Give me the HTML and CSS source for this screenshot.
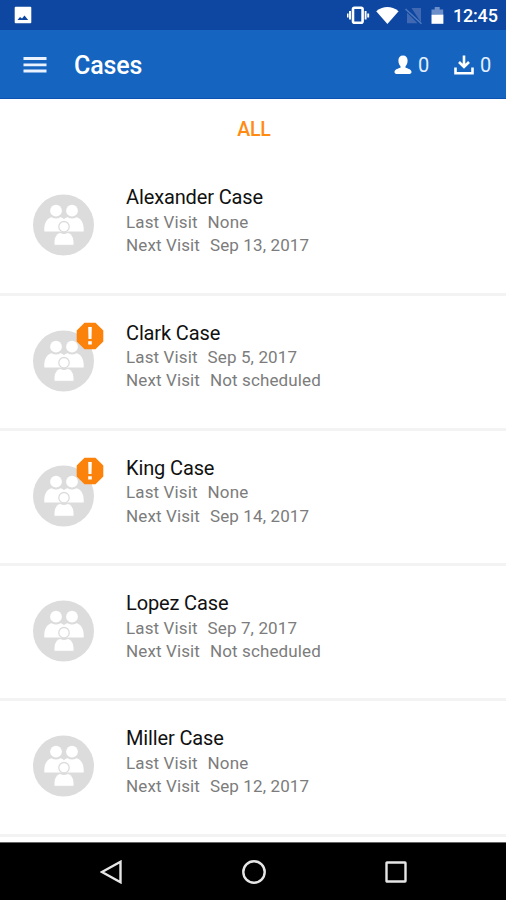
FILE: index.html
```html
<!DOCTYPE html>
<html lang="en">
<head>
<meta charset="utf-8">
<title>Cases</title>
<link rel="stylesheet" href="styles.css">
</head>
<body>
<svg class="defs" width="0" height="0" aria-hidden="true">
  <symbol id="family" viewBox="0 0 62 62">
    <circle cx="31.500" cy="31" r="30.500" fill="#dcdcdc"/>
    <g fill="#fff">
      <circle cx="24" cy="16.700" r="5.900"/><circle cx="40" cy="16.700" r="5.900"/>
      <path d="M12.300 37.500v-2.500c0-6 2.700-10.700 7.200-11.700q4.500 2.500 9 0c1.500.3 2.500 1 3.500 2 1-1 2-1.700 3.500-2q4.500 2.500 9 0c4.500 1 7.200 5.700 7.200 11.700v2.500z"/>
    </g>
    <path d="M22 51.300v-3c0-5 2.300-8.800 6-9.800q4 2 8 0c3.700 1 6 4.800 6 9.800v3z" fill="#fff" stroke="#dcdcdc" stroke-width="1"/>
    <circle cx="32" cy="32.700" r="5.200" fill="#fff" stroke="#dcdcdc" stroke-width="1.300"/>
  </symbol>
  <symbol id="alert" viewBox="0 0 28 28">
    <path d="M8.500.7h11l7.800 7.800v11l-7.800 7.800h-11L.7 19.500v-11z" fill="#fb830b"/>
    <path d="M12.200 5h3.600l-.3 12h-3zM12.200 19.200h3.600v3.400h-3.600z" fill="#fff"/>
  </symbol>
</svg>
<div class="screen">
  <div class="status">
    <svg class="photo" width="18" height="18" viewBox="0 0 18 18"><rect x=".7" y=".7" width="16.600" height="16.600" rx="1" fill="#fff"/><path d="M3.500 14l2.500-3 2 1.500 2.500-3 3.700 4.500z" fill="#0d47a1"/></svg>
    <svg class="sys" width="106" height="20" viewBox="0 0 106 20">
      <rect x="6" y="2.700" width="9.600" height="15" rx="1.500" fill="none" stroke="#fff" stroke-width="2.600"/>
      <path d="M3 6v8.500M18.600 6v8.500M.6 8.500v4M21.200 8.500v4" stroke="#fff" stroke-width="1.900"/>
      <path d="M29.200 6.200q11.200-8.200 22.400 0L40.400 18.900z" fill="#fff"/>
      <path d="M64.500 3H74v14.500zM60 7.500l10.500 10.800H60z" fill="#4169b3"/>
      <path d="M58.500 4L74.500 18.800" stroke="#4f79bd" stroke-width="1.500"/>
      <path d="M84.500 9V4.500h3.200V2h5v2.500h3.500v5z" fill="#6c8fc9"/><path d="M84.500 9.500h11.900v9.300H84.500z" fill="#fff"/>
    </svg>
    <span class="clock">12:45</span>
  </div>
  <header class="bar">
    <svg class="menu" width="24" height="18" viewBox="0 0 24 18"><path d="M.5 2.500h23M.5 8.800h23M.5 15h23" stroke="#eaf2ff" stroke-width="2.800"/></svg>
    <h1>Cases</h1>
    <svg class="person" width="18" height="20" viewBox="0 0 18 20"><path d="M9 .5c3 0 4.600 2 4.600 5 0 2.800-1 4.500-2.100 5.700v1.600c3.300.9 6 2 6 4.200 0 1.500-1.200 2-3 2H3.500c-1.800 0-3-.5-3-2 0-2.200 2.700-3.300 6-4.200v-1.600C5.400 10 4.400 8.300 4.400 5.500c0-3 1.600-5 4.600-5z" fill="#fff"/></svg>
    <span class="count">0</span>
    <svg class="download" width="20" height="20" viewBox="0 0 20 20"><path d="M10 .5v11M5 7l5 5 5-5M1.500 12.500v5.700h17v-5.700" fill="none" stroke="#fff" stroke-width="2.600"/></svg>
    <span class="count">0</span>
  </header>
  <main>
    <div class="filter">ALL</div>
    <ul class="cases">
      <li><div class="avatar"><svg class="face"><use href="#family"/></svg></div><div class="info"><h2>Alexander Case</h2><p><span>Last Visit</span><span>None</span></p><p><span>Next Visit</span><span>Sep 13, 2017</span></p></div></li>
      <li><div class="avatar"><svg class="face"><use href="#family"/></svg><svg class="badge"><use href="#alert"/></svg></div><div class="info"><h2>Clark Case</h2><p><span>Last Visit</span><span>Sep 5, 2017</span></p><p><span>Next Visit</span><span>Not scheduled</span></p></div></li>
      <li><div class="avatar"><svg class="face"><use href="#family"/></svg><svg class="badge"><use href="#alert"/></svg></div><div class="info"><h2>King Case</h2><p><span>Last Visit</span><span>None</span></p><p><span>Next Visit</span><span>Sep 14, 2017</span></p></div></li>
      <li><div class="avatar"><svg class="face"><use href="#family"/></svg></div><div class="info"><h2>Lopez Case</h2><p><span>Last Visit</span><span>Sep 7, 2017</span></p><p><span>Next Visit</span><span>Not scheduled</span></p></div></li>
      <li><div class="avatar"><svg class="face"><use href="#family"/></svg></div><div class="info"><h2>Miller Case</h2><p><span>Last Visit</span><span>None</span></p><p><span>Next Visit</span><span>Sep 12, 2017</span></p></div></li>
    </ul>
  </main>
  <nav class="keys">
    <svg width="24" height="24" viewBox="0 0 24 24"><path d="M20.500 1.800v20.400L2 12z"/></svg>
    <svg width="24" height="24" viewBox="0 0 24 24"><circle cx="12" cy="12" r="10.700"/></svg>
    <svg width="24" height="24" viewBox="0 0 24 24"><rect x="2.500" y="2.500" width="19" height="19" rx=".5"/></svg>
  </nav>
</div>
</body>
</html>
```
FILE: styles.css
```css
* { box-sizing: border-box; }
body, h1, h2, p, ul { margin: 0; padding: 0; font-weight: 400; }
body { font-family: Roboto, "Liberation Sans", sans-serif; background: #fff; }
svg { display: block; flex: none; }
.defs { position: absolute; }
.screen { width: 506px; height: 900px; display: flex; flex-direction: column; overflow: hidden; }
.status { height: 30px; flex: none; background: #0d47a1; display: flex; align-items: center; padding: 0 9px 0 14px; color: #fff; }
.sys { margin-left: auto; }
.clock { width: 44px; font-size: 18px; font-weight: 500; line-height: 30px; letter-spacing: -.2px; padding-top: 2px; white-space: nowrap; }
.bar { height: 69px; flex: none; background: #1565c0; border-bottom: 1px solid #0d52b0; display: flex; align-items: center; padding: 2px 14px 0 23px; color: #fff; }
.bar h1 { margin: 2px auto 0 27px; font-size: 25px; font-weight: 500; line-height: 32px; letter-spacing: -.15px; }
.count { margin-left: 6px; width: 12px; font-size: 20px; line-height: 28px; color: #e3efff; }
.download { margin-left: 24px; }
main { flex: 1; min-height: 0; overflow: hidden; background: #fff; }
.filter { height: 60px; line-height: 61px; text-align: center; font-size: 19.500px; font-weight: 500; letter-spacing: -.2px; color: #ff8b12; padding-left: 2px; }
.cases { list-style: none; }
.cases li { height: 135.300px; display: flex; border-bottom: 3px solid #f3f3f3; padding: 25px 0 0 32px; }
.cases li:first-child { height: 136.500px; padding-top: 26px; }
.avatar { position: relative; width: 62px; height: 62px; margin-top: 9px; }
.face { width: 62px; height: 62px; }
.badge { position: absolute; left: 44px; top: -7.500px; width: 28px; height: 28px; }
.info { margin-left: 32px; }
.info h2 { font-size: 20px; line-height: 25px; margin-bottom: .6px; color: #111; letter-spacing: -.13px; }
.info p { display: flex; font-size: 17px; line-height: 23.300px; color: #7c7c7c; letter-spacing: .12px; }
.info p span + span { margin-left: 10px; }
.keys { height: 58px; flex: none; background: #000; border-top: 1px solid #666; display: grid; grid-template-columns: repeat(3, 24px); column-gap: 118px; justify-content: center; align-items: center; padding-left: 2px; }
.keys svg { fill: none; stroke: #e6e6e6; stroke-width: 2.400; }
```
